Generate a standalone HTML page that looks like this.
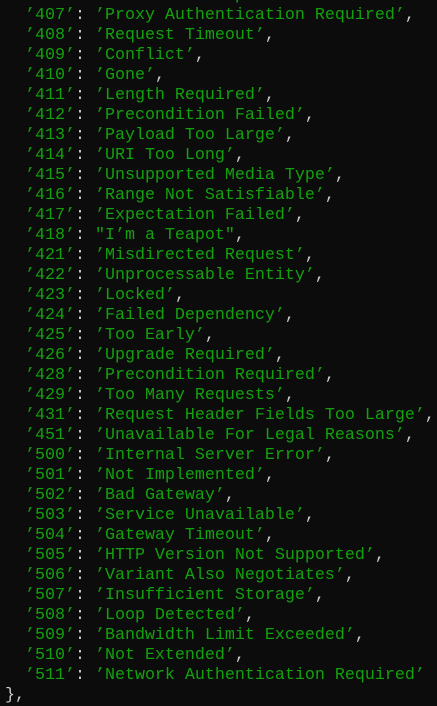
<!DOCTYPE html>
<html><head><meta charset="utf-8"><style>
html,body{margin:0;padding:0;background:#0c0c0c;width:437px;height:706px;overflow:hidden}
pre{margin:0;position:absolute;left:5px;top:-14px;font-family:"Liberation Mono",monospace;font-size:16.667px;line-height:20px;color:#13a10e;white-space:pre}
b{font-weight:normal;color:#cccccc}
</style></head><body><pre>                       p
  ’407’<b>:</b> ’Proxy Authentication Required’<b>,</b>
  ’408’<b>:</b> ’Request Timeout’<b>,</b>
  ’409’<b>:</b> ’Conflict’<b>,</b>
  ’410’<b>:</b> ’Gone’<b>,</b>
  ’411’<b>:</b> ’Length Required’<b>,</b>
  ’412’<b>:</b> ’Precondition Failed’<b>,</b>
  ’413’<b>:</b> ’Payload Too Large’<b>,</b>
  ’414’<b>:</b> ’URI Too Long’<b>,</b>
  ’415’<b>:</b> ’Unsupported Media Type’<b>,</b>
  ’416’<b>:</b> ’Range Not Satisfiable’<b>,</b>
  ’417’<b>:</b> ’Expectation Failed’<b>,</b>
  ’418’<b>:</b> ″I’m a Teapot″<b>,</b>
  ’421’<b>:</b> ’Misdirected Request’<b>,</b>
  ’422’<b>:</b> ’Unprocessable Entity’<b>,</b>
  ’423’<b>:</b> ’Locked’<b>,</b>
  ’424’<b>:</b> ’Failed Dependency’<b>,</b>
  ’425’<b>:</b> ’Too Early’<b>,</b>
  ’426’<b>:</b> ’Upgrade Required’<b>,</b>
  ’428’<b>:</b> ’Precondition Required’<b>,</b>
  ’429’<b>:</b> ’Too Many Requests’<b>,</b>
  ’431’<b>:</b> ’Request Header Fields Too Large’<b>,</b>
  ’451’<b>:</b> ’Unavailable For Legal Reasons’<b>,</b>
  ’500’<b>:</b> ’Internal Server Error’<b>,</b>
  ’501’<b>:</b> ’Not Implemented’<b>,</b>
  ’502’<b>:</b> ’Bad Gateway’<b>,</b>
  ’503’<b>:</b> ’Service Unavailable’<b>,</b>
  ’504’<b>:</b> ’Gateway Timeout’<b>,</b>
  ’505’<b>:</b> ’HTTP Version Not Supported’<b>,</b>
  ’506’<b>:</b> ’Variant Also Negotiates’<b>,</b>
  ’507’<b>:</b> ’Insufficient Storage’<b>,</b>
  ’508’<b>:</b> ’Loop Detected’<b>,</b>
  ’509’<b>:</b> ’Bandwidth Limit Exceeded’<b>,</b>
  ’510’<b>:</b> ’Not Extended’<b>,</b>
  ’511’<b>:</b> ’Network Authentication Required’
<b>},</b>
</pre></body></html>
